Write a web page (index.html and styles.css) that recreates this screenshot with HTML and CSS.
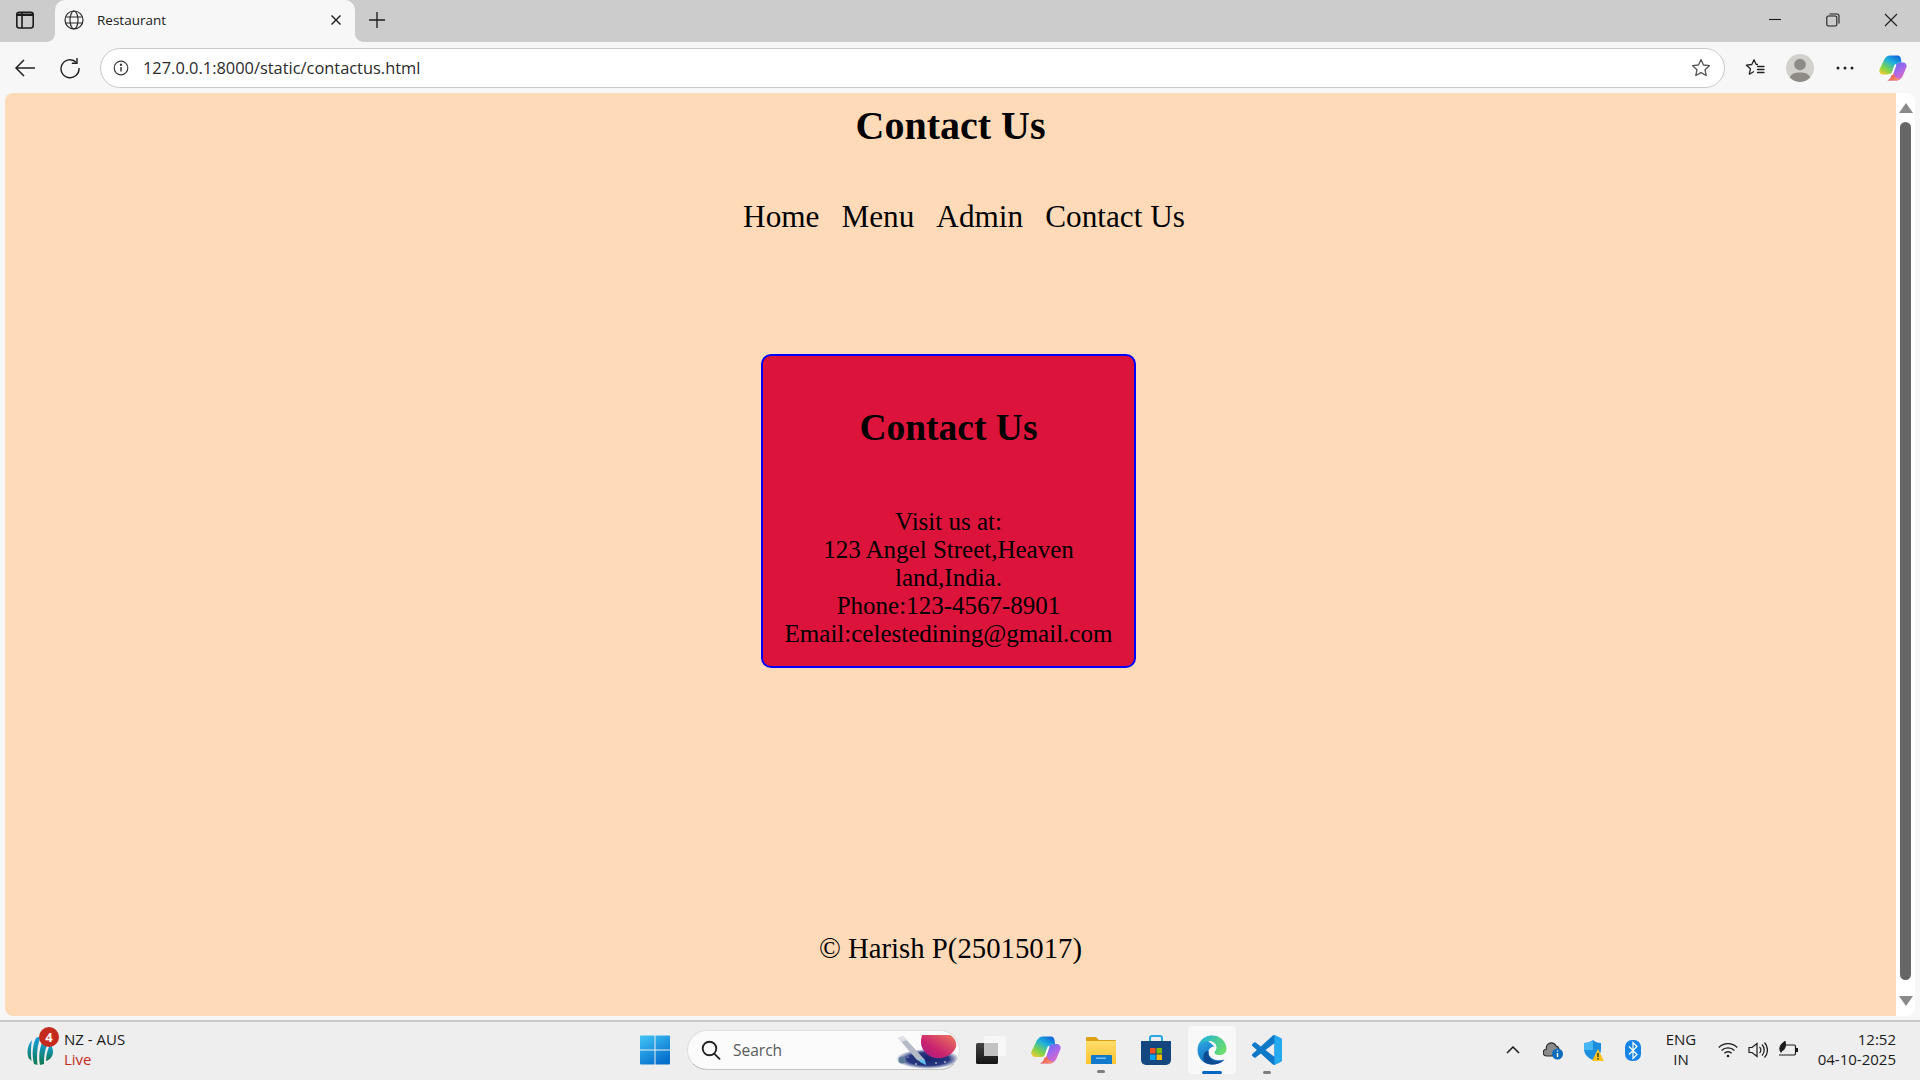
FILE: index.html

```html
<!DOCTYPE html>
<html lang="en">
<head>
    <meta charset="UTF-8">
    <meta name="viewport" content="width=device-width, initial-scale=1.0">
    <title>Restaurant</title>
    <link rel="stylesheet" href="styles.css">
</head>
<body>
    <svg class="defs" width="0" height="0" aria-hidden="true">
        <defs>
            <linearGradient id="winBlue" x1="0" y1="0" x2="0.6" y2="1">
                <stop offset="0" stop-color="#43c6f8"/>
                <stop offset="1" stop-color="#0670cc"/>
            </linearGradient>
            <linearGradient id="copA" x1="0.8" y1="0" x2="0.1" y2="1">
                <stop offset="0" stop-color="#1268dc"/>
                <stop offset="0.35" stop-color="#1fb2dc"/>
                <stop offset="0.7" stop-color="#7fd44a"/>
                <stop offset="1" stop-color="#f6c92c"/>
            </linearGradient>
            <linearGradient id="copB" x1="0.2" y1="0" x2="0.9" y2="1">
                <stop offset="0" stop-color="#4d6ff0"/>
                <stop offset="0.5" stop-color="#a968ea"/>
                <stop offset="1" stop-color="#f06ab8"/>
            </linearGradient>
            <linearGradient id="copC" x1="0" y1="0" x2="1" y2="1">
                <stop offset="0" stop-color="#e8402e"/>
                <stop offset="1" stop-color="#f59a7a"/>
            </linearGradient>
            <linearGradient id="edgeBody" x1="0.2" y1="0.1" x2="0.6" y2="1">
                <stop offset="0" stop-color="#2fa9e6"/>
                <stop offset="1" stop-color="#0b62b4"/>
            </linearGradient>
            <linearGradient id="edgeTop" x1="0" y1="0.2" x2="1" y2="0.7">
                <stop offset="0" stop-color="#1fb5d8"/>
                <stop offset="1" stop-color="#6ede6a"/>
            </linearGradient>
            <linearGradient id="leaf" x1="0" y1="0" x2="0" y2="1">
                <stop offset="0" stop-color="#17a0e6"/>
                <stop offset="1" stop-color="#0f7a50"/>
            </linearGradient>
            <linearGradient id="planet" x1="1" y1="0" x2="0" y2="1">
                <stop offset="0" stop-color="#ee7b5c"/>
                <stop offset="0.6" stop-color="#c9236f"/>
                <stop offset="1" stop-color="#a01a86"/>
            </linearGradient>
            <radialGradient id="space">
                <stop offset="0" stop-color="#16246e"/>
                <stop offset="0.65" stop-color="#27377f"/>
                <stop offset="1" stop-color="#27377f" stop-opacity="0"/>
            </radialGradient>
            <linearGradient id="folder" x1="0" y1="0" x2="0" y2="1">
                <stop offset="0" stop-color="#ffdc6b"/>
                <stop offset="1" stop-color="#fcc42e"/>
            </linearGradient>
            <linearGradient id="darkTile" x1="0" y1="0" x2="0" y2="1">
                <stop offset="0" stop-color="#444"/>
                <stop offset="1" stop-color="#141414"/>
            </linearGradient>
            <symbol id="copilotMark" viewBox="0 0 30 28">
                <path d="M18 27.500H9C12 26.500 13 24 14 21L17 12C18 9.500 20 8 23 8H26C28.500 8 30.300 10.500 29.500 13L25.500 22.500C24 26 21 27.500 18 27.500z" fill="url(#copB)"/>
                <path d="M9 27.500C12 26.500 13 24 14 21L15 18C16 22 18 25 22.500 26C21.500 27 19.500 27.500 18 27.500z" fill="url(#copC)"/>
                <path d="M12 .5H20C22.500.5 24 3 24 8H23C20 8 18.500 9.500 17.500 11.500L15.500 17 14 19.500C12.500 20.500 11 21 8 21H4.500C1.500 21-.5 18.500.5 15.500L5 6C6.500 2.500 9 .5 12 .5z" fill="url(#copA)"/>
                <path d="M17.500 11l-3.300 9.500" fill="none" stroke="#fff" stroke-width="2" stroke-linecap="round"/>
            </symbol>
        </defs>
    </svg>

    <div class="window">
        <header class="tabstrip">
            <svg class="tab-side" width="20" height="20" viewBox="0 0 20 20" fill="none" stroke="#1b1b1b" stroke-width="1.6">
                <rect x="1.8" y="2.2" width="16.4" height="15.8" rx="2.5"/>
                <path d="M7 2.5V18"/>
                <path d="M2 3.5h16v2.5H2z" fill="#1b1b1b" stroke="none"/>
            </svg>
            <div class="tab">
                <svg width="20" height="20" viewBox="0 0 20 20" fill="none" stroke="#2b2b2b" stroke-width="1.2">
                    <circle cx="10" cy="10" r="9"/>
                    <ellipse cx="10" cy="10" rx="4" ry="9"/>
                    <path d="M1.6 7h16.8M1.6 13h16.8"/>
                </svg>
                <span class="tab-title">Restaurant</span>
                <svg class="tab-close" width="12" height="12" viewBox="0 0 12 12" stroke="#1b1b1b" stroke-width="1.4">
                    <path d="M1.5 1.5l9 9M10.5 1.5l-9 9"/>
                </svg>
            </div>
            <svg class="tab-new" width="18" height="18" viewBox="0 0 18 18" stroke="#1b1b1b" stroke-width="1.3">
                <path d="M9 1v16M1 9h16"/>
            </svg>
            <div class="win-controls">
                <svg width="14" height="14" viewBox="0 0 14 14" stroke="#1b1b1b" stroke-width="1.1"><path d="M1 6.500h12"/></svg>
                <svg width="14" height="14" viewBox="0 0 14 14" fill="none" stroke="#1b1b1b" stroke-width="1.1"><rect x="0.8" y="3" width="10" height="10" rx="1.6"/><path d="M3.500 1h7.500a2 2 0 0 1 2 2v7.500"/></svg>
                <svg width="14" height="14" viewBox="0 0 14 14" stroke="#1b1b1b" stroke-width="1.1"><path d="M1 1l12 12M13 1L1 13"/></svg>
            </div>
        </header>

        <div class="toolbar">
            <svg class="tool-back" width="22" height="20" viewBox="0 0 22 20" fill="none" stroke="#222" stroke-width="1.5">
                <path d="M21 10H2M10 2l-8 8 8 8"/>
            </svg>
            <svg class="tool-reload" width="22" height="22" viewBox="0 0 22 22" fill="none" stroke="#222" stroke-width="1.4">
                <path d="M17.500 5.500A9 9 0 1 0 20 11"/>
                <path d="M18 1v5.200h-5.200"/>
            </svg>
            <div class="address">
                <svg width="16" height="16" viewBox="0 0 16 16" fill="none" stroke="#3a3a3a" stroke-width="1.2">
                    <circle cx="8" cy="8" r="6.800"/>
                    <path d="M8 7v4.500" stroke-width="1.500"/>
                    <circle cx="8" cy="4.800" r="0.600" fill="#3a3a3a"/>
                </svg>
                <span class="url">127.0.0.1:8000/static/contactus.html</span>
                <svg class="addr-star" width="20" height="20" viewBox="0 0 20 20" fill="none" stroke="#555" stroke-width="1.300" stroke-linejoin="round">
                    <path d="M10 1.600l2.500 5.400 5.900.7-4.400 4 1.200 5.800L10 14.600l-5.200 2.900L6 11.700l-4.400-4 5.900-.7z"/>
                </svg>
            </div>
            <svg class="tool-favs" width="20" height="20" viewBox="0 0 20 20" fill="none" stroke="#222" stroke-width="1.300" stroke-linejoin="round">
                <path d="M13 6.500L11 6.300 9 1.800 6.800 6.500 1.400 7.200l4 3.600-1.100 5.400L9 13.500"/>
                <path d="M12.500 8.500h6.500M12.500 11.500h6.500M12.500 14.500h6.500" stroke-linecap="round"/>
            </svg>
            <svg class="tool-avatar" width="28" height="28" viewBox="0 0 28 28">
                <circle cx="14" cy="14" r="14" fill="#d3d1cd"/>
                <circle cx="14" cy="10.500" r="5.800" fill="#8e8a85"/>
                <path d="M3.800 23.500C5.500 19.600 9 18.500 14 18.500s8.500 1.100 10.200 5a14 14 0 0 1-20.400 0z" fill="#8e8a85"/>
            </svg>
            <svg class="tool-more" width="18" height="4" viewBox="0 0 18 4" fill="#222">
                <circle cx="2" cy="2" r="1.500"/><circle cx="9" cy="2" r="1.500"/><circle cx="16" cy="2" r="1.500"/>
            </svg>
            <svg class="tool-copilot" width="28" height="26"><use href="#copilotMark"/></svg>
        </div>

        <div class="content-row">
            <main class="page">
                <h1 class="site-title">Contact Us</h1>
                <nav class="site-nav">
                    <a href="#">Home</a>
                    <a href="#">Menu</a>
                    <a href="#">Admin</a>
                    <a href="#">Contact Us</a>
                </nav>
                <section class="contact-wrap">
                    <div class="contact-card">
                        <h2>Contact Us</h2>
                        <p>Visit us at:<br>123 Angel Street,Heaven land,India.<br>Phone:123-4567-8901<br>Email:celestedining@gmail.com</p>
                    </div>
                </section>
                <footer class="site-footer">© Harish P(25015017)</footer>
            </main>
            <div class="scrollbar">
                <span class="arrow-up"></span>
                <span class="thumb"></span>
                <span class="arrow-down"></span>
            </div>
        </div>

        <footer class="taskbar">
            <div class="widget">
                <div class="widget-icon">
                    <svg width="26" height="32" viewBox="0 0 26 32" fill="url(#leaf)">
                        <path d="M1.500 24C-.5 18 .5 11 5 6c-1 6-1.500 13-.5 21z"/>
                        <path d="M7 30C5 22 5 12 9 4c2-1 4-1.500 5-1.500C10 11 9.500 21 10.500 31z"/>
                        <path d="M13 31c-1.500-8-1-17 4-27 2 0 4 1 5 3-4 7-5 15-5 23z"/>
                        <path d="M19 27c0-6 1.500-12 4.500-17 1.500 2 2.500 5 2.500 8 0 4-3 8-7 9z"/>
                    </svg>
                    <span class="badge">4</span>
                </div>
                <div class="widget-text">
                    <span>NZ - AUS</span>
                    <span class="live">Live</span>
                </div>
            </div>

            <div class="dock">
                <svg class="dock-start" width="30" height="30" viewBox="0 0 30 30" fill="url(#winBlue)">
                    <path d="M1 .5h13.500v14H0v-13a1 1 0 0 1 1-1zM15.500 .5H29a1 1 0 0 1 1 1v13H15.500zM0 15.500h14.500v14H1a1 1 0 0 1-1-1zM15.500 15.500H30v13a1 1 0 0 1-1 1H15.500z"/>
                </svg>
                <div class="search">
                    <svg width="20" height="20" viewBox="0 0 20 20" fill="none" stroke="#222" stroke-width="1.900">
                        <circle cx="8.500" cy="8.500" r="6.800"/>
                        <path d="M13.500 13.800l5 5" stroke-linecap="round"/>
                    </svg>
                    <span>Search</span>
                    <svg class="search-art" width="62" height="37" viewBox="0 0 62 37">
                        <ellipse cx="33" cy="27" rx="32" ry="10" fill="url(#space)"/>
                        <path d="M27 3h28c5 3 7 8 6 12-3 8-12 12-21 11-9-2-15-10-14-18z" fill="url(#planet)"/>
                        <path d="M3 6l5-2 22 24-2 3-6-3z" fill="#b5bac6"/>
                        <path d="M3 6l5-2 4 4-6 2z" fill="#e0e2e8"/>
                        <path d="M24 27l6 1 1 5-6-3z" fill="#64c0f0"/>
                        <circle cx="7" cy="28" r="3.500" fill="#5c7c98"/>
                        <circle cx="21" cy="32" r="0.800" fill="#fff"/>
                        <circle cx="41" cy="31" r="0.800" fill="#fff"/>
                        <circle cx="50" cy="30" r="0.800" fill="#fff"/>
                        <circle cx="13" cy="25" r="0.600" fill="#fff"/>
                    </svg>
                </div>
                <svg class="dock-taskview" width="30" height="28" viewBox="0 0 30 28">
                    <rect x="0" y="7" width="22" height="21" rx="1.500" fill="url(#darkTile)"/>
                    <rect x="8" y="0" width="22" height="20" rx="1.500" fill="#f7f7f7"/>
                    <rect x="8" y="7" width="14" height="13" fill="#c2c2c2"/>
                </svg>
                <svg class="dock-copilot" width="30" height="28"><use href="#copilotMark"/></svg>
                <div class="dock-item dock-files">
                    <svg width="30" height="28" viewBox="0 0 30 28">
                        <path d="M0 2a1 1 0 0 1 1-1h9l3 3h16a1 1 0 0 1 1 1v6H0z" fill="#dda012"/>
                        <path d="M0 5h30v23H0z" fill="url(#folder)"/>
                        <path d="M5 20a1 1 0 0 1 1-1h19a1 1 0 0 1 1 1v8H5z" fill="#1179c9"/>
                        <rect x="10" y="21.500" width="10" height="1.500" fill="#7ec0ee"/>
                    </svg>
                    <span class="pin"></span>
                </div>
                <svg class="dock-store" width="30" height="30" viewBox="0 0 30 30">
                    <path d="M9 8V3a2 2 0 0 1 2-2h8a2 2 0 0 1 2 2v5" fill="none" stroke="#2aa6e0" stroke-width="2"/>
                    <path d="M0 6h30v19a5 5 0 0 1-5 5H5a5 5 0 0 1-5-5z" fill="#14477f"/>
                    <rect x="9" y="13" width="5.500" height="5.500" fill="#f25022"/>
                    <rect x="15.500" y="13" width="5.500" height="5.500" fill="#7fba00"/>
                    <rect x="9" y="19.500" width="5.500" height="5.500" fill="#00a4ef"/>
                    <rect x="15.500" y="19.500" width="5.500" height="5.500" fill="#ffb900"/>
                </svg>
                <div class="dock-item dock-edge">
                    <svg width="30" height="30" viewBox="0 0 30 30">
                        <path d="M15 .5C7 .5 .5 7 .5 15c0 8.500 6.500 14.500 14.500 14.500 5 0 9.500-1.500 12.500-5C24 25.500 21 25.500 19 25c-5-1-8-4.500-7.500-8.500.4-3 3-5 6-5L10 5z" fill="url(#edgeBody)"/>
                        <path d="M11.500 16.500C11 22 15 26.500 20.500 26.800c2.500.2 5-.6 7-2.300-3 3.500-7.500 5-12.500 5-3 0-5.500-1-7.500-2.500-1.500-3-1.500-6.500 0-9 1-1.500 2.500-2.500 4-1.500z" fill="#0d4b93"/>
                        <path d="M2 10.500C4.500 4 9 .5 15.500 .5 23.500 .5 29.500 7 29.500 13.500c0 4-2.500 6.500-7 6.500-2.500 0-4.500-.5-5-2s2-2.500 2-5.500c0-4-3.500-6.500-7.500-6.500-4.500 0-8 2-10.500 4.500z" fill="url(#edgeTop)"/>
                    </svg>
                    <span class="pin pin-active"></span>
                </div>
                <div class="dock-item dock-code">
                    <svg width="30" height="30" viewBox="0 0 24 24">
                        <path d="M23.150 2.587L18.210.21a1.494 1.494 0 0 0-1.705.29l-9.460 8.630-4.120-3.128a.999.999 0 0 0-1.276.057L.327 7.261A1 1 0 0 0 .326 8.740L3.899 12 .326 15.260a1 1 0 0 0 .001 1.479L1.650 17.940a.999.999 0 0 0 1.276.057l4.120-3.128 9.460 8.630a1.492 1.492 0 0 0 1.704.29l4.942-2.377A1.500 1.500 0 0 0 24 20.060V3.939a1.500 1.500 0 0 0-.850-1.352zm-5.146 14.861L10.826 12l7.178-5.448v10.896z" fill="#0f78c9"/>
                        <path d="M16.800.1c.5-.1 1 0 1.410.11l4.940 2.377A1.500 1.500 0 0 1 24 3.939V20.060a1.500 1.500 0 0 1-.850 1.352l-4.940 2.377c-.45.2-.95.25-1.410.1.7.3 1.200-.3 1.200-1V1.200c0-.7-.5-1.300-1.200-1.100z" fill="#25a9ef"/>
                    </svg>
                    <span class="pin"></span>
                </div>
            </div>

            <div class="tray">
                <svg class="tray-chevron" width="14" height="8" viewBox="0 0 14 8" fill="none" stroke="#1b1b1b" stroke-width="1.500"><path d="M1 7l6-6 6 6"/></svg>
                <svg class="tray-cloud" width="20" height="20" viewBox="0 0 20 20">
                    <path d="M4 16a3.500 3.500 0 0 1-.5-7A5 5 0 0 1 13 6a4 4 0 0 1 3 4l-4 6z" fill="#8b8b8b" stroke="#2b2b2b" stroke-width="1.200"/>
                    <circle cx="14.500" cy="14" r="5.500" fill="#0f6cbd"/>
                    <path d="M14.500 13v4M14.500 10.600v1" stroke="#fff" stroke-width="1.400"/>
                </svg>
                <svg class="tray-shield" width="20" height="21" viewBox="0 0 20 21">
                    <path d="M9 0c2 2 5 3 8 3v6c0 5-3 9-8 11-5-2-9-6-9-11V3c3 0 7-1 9-3z" fill="#1a8fe0"/>
                    <path d="M9 0v10H0V3c3 0 7-1 9-3z" fill="#45b6f2"/>
                    <path d="M14 9l6 12H8z" fill="#ffc21a"/>
                    <path d="M14 13v4M14 18v1.500" stroke="#222" stroke-width="1.300"/>
                </svg>
                <svg class="tray-bt" width="16" height="21" viewBox="0 0 16 21">
                    <rect x="0" y="0" width="16" height="21" rx="7" fill="#1583e8"/>
                    <path d="M4 6.500l8 8-4 4V2.500l4 4-8 8" fill="none" stroke="#fff" stroke-width="1.200"/>
                </svg>
                <div class="lang"><span>ENG</span><span>IN</span></div>
                <svg class="tray-wifi" width="20" height="16" viewBox="0 0 20 16" fill="none" stroke="#1b1b1b" stroke-width="1.300">
                    <path d="M.8 5.500a13 13 0 0 1 18.400 0M3.600 8.500a9 9 0 0 1 12.800 0M6.400 11.300a5 5 0 0 1 7.200 0"/>
                    <circle cx="10" cy="14" r="1.300" fill="#1b1b1b" stroke="none"/>
                </svg>
                <svg class="tray-vol" width="20" height="16" viewBox="0 0 20 16" fill="none" stroke="#1b1b1b" stroke-width="1.200">
                    <path d="M1 5.500h3l5-4v13l-5-4H1z"/>
                    <path d="M11.500 5a4 4 0 0 1 0 6M14 2.500a8 8 0 0 1 0 11M16.500 .5a11 11 0 0 1 0 15"/>
                </svg>
                <svg class="tray-batt" width="20" height="18" viewBox="0 0 20 18" fill="none" stroke="#1b1b1b" stroke-width="1.200">
                    <path d="M8 4h8a1.500 1.500 0 0 1 1.500 1.500v7a1.500 1.500 0 0 1-1.500 1.500H1"/>
                    <path d="M18 7.500h1.500v3H18" fill="#1b1b1b"/>
                    <path d="M3 11C1 8 2 4 7 .5c1 4 0 8-3 9z" fill="#1b1b1b"/>
                </svg>
                <div class="clock"><span>12:52</span><span>04-10-2025</span></div>
            </div>
        </footer>
    </div>
</body>
</html>
```

FILE: styles.css

```css
* {
    box-sizing: border-box;
}

html, body {
    margin: 0;
    padding: 0;
    height: 100%;
    overflow: hidden;
}

body {
    font-family: "Open Sans", "Noto Sans", sans-serif;
    color: #1b1b1b;
}

.defs {
    position: absolute;
}

.window {
    height: 1080px;
    display: flex;
    flex-direction: column;
    background: #f7f7f7;
}

/* browser tabs */
.tabstrip {
    height: 42px;
    flex: none;
    background: #cccccc;
    display: flex;
    align-items: center;
}

.tab-side {
    margin-left: 15px;
    margin-right: 20px;
    margin-bottom: 2px;
}

.tab {
    position: relative;
    width: 300px;
    height: 42px;
    background: #f7f7f7;
    border-radius: 10px 10px 0 0;
    display: flex;
    align-items: center;
    padding-left: 9px;
    padding-bottom: 2px;
}

.tab::before,
.tab::after {
    content: "";
    position: absolute;
    bottom: 0;
    width: 8px;
    height: 8px;
}

.tab::before {
    left: -8px;
    background: radial-gradient(circle at 0 0, #cccccc 7.5px, #f7f7f7 8px);
}

.tab::after {
    right: -8px;
    background: radial-gradient(circle at 100% 0, #cccccc 7.5px, #f7f7f7 8px);
}

.tab-title {
    margin-left: 13px;
    font-size: 13.5px;
    color: #222;
}

.tab-close {
    margin-left: auto;
    margin-right: 13px;
}

.tab-new {
    margin-left: 13px;
    margin-bottom: 2px;
}

.win-controls {
    margin-left: auto;
    margin-bottom: 2px;
    display: flex;
    gap: 44px;
    padding-right: 22px;
}

/* address row */
.toolbar {
    height: 51px;
    flex: none;
    display: flex;
    align-items: center;
}

.tool-back {
    margin-left: 14px;
}

.tool-reload {
    margin-left: 23px;
}

.address {
    width: 1625px;
    height: 40px;
    margin-left: 19px;
    background: #fff;
    border: 1px solid #c9c9c9;
    border-radius: 20px;
    display: flex;
    align-items: center;
    padding-left: 12px;
    padding-right: 13px;
}

.url {
    margin-left: 14px;
    font-size: 16.4px;
    color: #2b2b2b;
}

.addr-star {
    margin-left: auto;
}

.tool-favs {
    margin-left: 20px;
}

.tool-avatar {
    margin-left: 21px;
}

.tool-more {
    margin-left: 22px;
}

.tool-copilot {
    margin-left: 25px;
}

/* page */
.content-row {
    height: 923px;
    flex: none;
    display: flex;
    padding-left: 5px;
    padding-right: 5px;
}

.page {
    width: 1891px;
    background: #ffdab9;
    border-radius: 8px 0 0 8px;
    font-family: "Liberation Serif", "Times New Roman", serif;
    color: #000;
    display: flex;
    flex-direction: column;
    align-items: center;
}

.site-title {
    margin: 10px 0 0;
    font-size: 40px;
    line-height: 46px;
}

.site-nav {
    margin-top: 50px;
    padding-left: 27px;
    display: flex;
    gap: 22px;
    font-size: 31.25px;
    line-height: 36px;
}

.site-nav a {
    color: #000;
    text-decoration: none;
}

.contact-wrap {
    margin-top: 119px;
    padding-right: 4px;
}

.contact-card {
    width: 375px;
    height: 314px;
    background: #dc143c;
    border: 2.5px solid #0000ff;
    border-radius: 10px;
    padding: 0 20px;
    text-align: center;
}

.contact-card h2 {
    margin: 50px 0 0;
    font-size: 37.5px;
    line-height: 43px;
}

.contact-card p {
    margin: 59px 0 0;
    font-size: 25px;
    line-height: 28px;
}

.site-footer {
    margin-top: 264px;
    font-size: 28.75px;
    line-height: 33px;
}

.scrollbar {
    width: 19px;
    background: #fff;
    border-radius: 0 8px 8px 0;
    display: flex;
    flex-direction: column;
    align-items: center;
    padding-top: 10px;
    padding-bottom: 10px;
}

.arrow-up {
    width: 0;
    height: 0;
    border-left: 7px solid transparent;
    border-right: 7px solid transparent;
    border-bottom: 10px solid #8a8a8a;
}

.thumb {
    width: 11px;
    flex: 1;
    margin-top: 9px;
    margin-bottom: 16px;
    background: #666;
    border-radius: 6px;
}

.arrow-down {
    width: 0;
    height: 0;
    border-left: 7px solid transparent;
    border-right: 7px solid transparent;
    border-top: 10px solid #8a8a8a;
}

/* windows taskbar */
.taskbar {
    margin-top: 4px;
    height: 60px;
    flex: none;
    background: #eeeeee;
    border-top: 2px solid #c8c8c8;
    padding-bottom: 2px;
    display: flex;
    align-items: center;
}

.widget {
    width: 640px;
    flex: none;
    padding-left: 27px;
    display: flex;
    align-items: center;
}

.widget-icon {
    position: relative;
    width: 37px;
    height: 32px;
}

.badge {
    position: absolute;
    top: -7px;
    left: 12px;
    width: 20px;
    height: 20px;
    border-radius: 50%;
    background: #c42b1c;
    color: #fff;
    font-size: 13px;
    font-weight: 700;
    line-height: 20px;
    text-align: center;
}

.widget-text {
    display: flex;
    flex-direction: column;
    margin-bottom: 2px;
    font-size: 15px;
    line-height: 20px;
}

.live {
    color: #c42b1c;
}

.dock {
    display: flex;
    align-items: center;
}

.dock > svg,
.dock-item {
    flex: none;
}

.search {
    width: 273px;
    height: 40px;
    margin-left: 17px;
    background: #fbfbfb;
    border: 1px solid #dedede;
    border-bottom-color: #c4c4c4;
    border-radius: 20px;
    display: flex;
    align-items: center;
    padding-left: 13px;
    padding-right: 2px;
    overflow: hidden;
    font-size: 15.5px;
    color: #5a5a5a;
}

.search span {
    margin-left: 12px;
}

.search-art {
    margin-left: auto;
}

.dock-taskview {
    margin-left: 16px;
}

.dock-copilot {
    margin-left: 25px;
}

.dock-item {
    position: relative;
    display: flex;
    justify-content: center;
    align-items: center;
}

.dock-files {
    margin-left: 25px;
}

.dock-store {
    margin-left: 25px;
}

.dock-edge {
    width: 48px;
    height: 48px;
    margin-left: 17px;
    background: #f8f8f8;
    border-radius: 4px;
}

.dock-code {
    margin-left: 16px;
}

.pin {
    position: absolute;
    left: 50%;
    bottom: -9px;
    width: 8px;
    height: 3px;
    margin-left: -4px;
    border-radius: 2px;
    background: #7e7e7e;
}

.dock-edge .pin {
    bottom: 0;
}

.pin-active {
    width: 20px;
    margin-left: -10px;
    background: #0067c0;
}

.tray {
    width: 414px;
    flex: none;
    margin-left: auto;
    padding-right: 24px;
    display: flex;
    align-items: center;
}

.tray-cloud {
    margin-left: 23px;
}

.tray-shield {
    margin-left: 21px;
}

.tray-bt {
    margin-left: 21px;
}

.lang {
    width: 50px;
    margin-left: 15px;
    margin-bottom: 2px;
    display: flex;
    flex-direction: column;
    align-items: center;
    font-size: 15px;
    line-height: 20px;
}

.tray-wifi {
    margin-left: 12px;
}

.tray-vol {
    margin-left: 10px;
}

.tray-batt {
    margin-left: 10px;
}

.clock {
    margin-left: auto;
    margin-bottom: 2px;
    display: flex;
    flex-direction: column;
    align-items: flex-end;
    font-size: 15px;
    line-height: 20px;
}
```
